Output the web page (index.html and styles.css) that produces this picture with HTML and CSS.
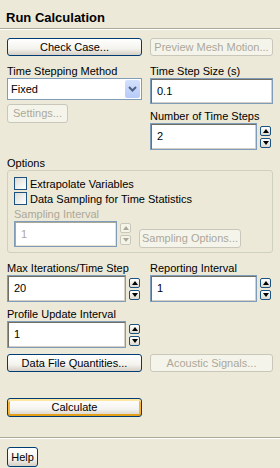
FILE: index.html
```html
<!DOCTYPE html>
<html>
<head>
  <title>Run Calculation</title>
  <link rel="stylesheet" href="styles.css">
</head>
<body>
  <div class="title">Run Calculation</div>
  <div class="sep"></div>

  <div class="content">
    <div class="row">
      <div class="button">Check Case...</div>
      <div class="button disabled">Preview Mesh Motion...</div>
    </div>

    <div class="row fields">
      <div class="col">
        <div class="label">Time Stepping Method</div>
        <div class="select">
          <span class="select-text">Fixed</span>
          <span class="select-arrow">
            <svg width="9" height="6" viewBox="0 0 9 6"><polyline points="1,1 4.5,4.5 8,1" fill="none" stroke="#4d6185" stroke-width="2"/></svg>
          </span>
        </div>
        <div class="button disabled small">Settings...</div>
      </div>
      <div class="col">
        <div class="label">Time Step Size (s)</div>
        <div class="input wide">0.1</div>
        <div class="label">Number of Time Steps</div>
        <div class="spin-field">
          <div class="input">2</div>
          <div class="spin">
            <div class="spin-btn"><span class="tri up"></span></div>
            <div class="spin-btn"><span class="tri down"></span></div>
          </div>
        </div>
      </div>
    </div>

    <div class="label options-label">Options</div>
    <div class="group">
      <div class="check"><span class="box"></span>Extrapolate Variables</div>
      <div class="check"><span class="box"></span>Data Sampling for Time Statistics</div>
      <div class="label dim">Sampling Interval</div>
      <div class="sampling">
        <div class="spin-field">
          <div class="input off">1</div>
          <div class="spin">
            <div class="spin-btn off"><span class="tri up"></span></div>
            <div class="spin-btn off"><span class="tri down"></span></div>
          </div>
        </div>
        <div class="button disabled sampling-btn">Sampling Options...</div>
      </div>
    </div>

    <div class="row fields lower">
      <div class="col">
        <div class="label">Max Iterations/Time Step</div>
        <div class="spin-field">
          <div class="input">20</div>
          <div class="spin">
            <div class="spin-btn"><span class="tri up"></span></div>
            <div class="spin-btn"><span class="tri down"></span></div>
          </div>
        </div>
        <div class="label">Profile Update Interval</div>
        <div class="spin-field">
          <div class="input">1</div>
          <div class="spin">
            <div class="spin-btn"><span class="tri up"></span></div>
            <div class="spin-btn"><span class="tri down"></span></div>
          </div>
        </div>
      </div>
      <div class="col">
        <div class="label">Reporting Interval</div>
        <div class="spin-field">
          <div class="input">1</div>
          <div class="spin">
            <div class="spin-btn"><span class="tri up"></span></div>
            <div class="spin-btn"><span class="tri down"></span></div>
          </div>
        </div>
      </div>
    </div>

    <div class="row data-row">
      <div class="button">Data File Quantities...</div>
      <div class="button disabled">Acoustic Signals...</div>
    </div>

    <div class="row calc-row">
      <div class="button default">Calculate</div>
    </div>
  </div>

  <div class="sep bottom-sep"></div>
  <div class="footer">
    <div class="button help">Help</div>
  </div>
</body>
</html>
```

FILE: styles.css
```css
* {
  box-sizing: border-box;
  margin: 0;
  padding: 0;
}

body {
  width: 280px;
  height: 468px;
  overflow: hidden;
  background-color: #ece9d8;
  font-family: "Liberation Sans", Arial, sans-serif;
  font-size: 11px;
  color: #000;
}

.title {
  height: 28px;
  padding: 10px 0 0 6px;
  font-size: 13px;
  font-weight: bold;
  line-height: 16px;
}

.sep {
  border-top: 1px solid #aca899;
  border-bottom: 1px solid #fff;
}

.content {
  padding: 8px 7px 0;
}

.row {
  display: grid;
  grid-template-columns: 135px 123px;
  column-gap: 8px;
}

.col {
  display: flex;
  flex-direction: column;
}

.label {
  height: 14px;
  line-height: 14px;
  white-space: nowrap;
}

.dim {
  color: #aca899;
}

.fields {
  margin-top: 8px;
}

.button {
  height: 18px;
  line-height: 16px;
  text-align: center;
  white-space: nowrap;
  border: 1px solid #003c74;
  border-radius: 3px;
  background: linear-gradient(#ffffff, #f4f3ee 60%, #d6d0c5);
}

.button.disabled {
  color: #aca899;
  border-color: #c9c7ba;
  background: #f5f4ea;
}

.button.small {
  width: 61px;
  height: 19px;
  margin-top: 4px;
}

.button.default {
  height: 19px;
  box-shadow: inset 0 2px 0 #ffe7a2, inset 0 -2px 0 #e5a01a, inset 2px 0 0 #f8b330, inset -2px 0 0 #f8b330;
}

.select {
  display: flex;
  align-items: center;
  height: 22px;
  border: 1px solid #7f9db9;
  background-color: #fff;
  padding: 1px;
}

.select-text {
  flex: 1;
  padding-left: 2px;
}

.select-arrow {
  width: 15px;
  height: 18px;
  display: flex;
  align-items: center;
  justify-content: center;
  background: linear-gradient(#d4e1fc, #b7cbf8);
  border-radius: 2px;
}

.input {
  height: 27px;
  line-height: 25px;
  padding-left: 6px;
  border: 1px solid #7f9db9;
  background-color: #fff;
  box-shadow: inset 1px 1px 0 #716f64, inset -1px -1px 0 #d4d0c8;
  flex: 1;
}

.input.wide {
  height: 26px;
  line-height: 24px;
  margin-bottom: 5px;
}

.input.off {
  color: #aca899;
  box-shadow: inset 1px 1px 0 #aca899, inset -1px -1px 0 #e6e3d3;
}

.spin-field {
  display: flex;
  align-items: center;
  gap: 3px;
  margin-right: 2px;
}

.spin {
  display: flex;
  flex-direction: column;
  gap: 2px;
}

.spin-btn {
  width: 11px;
  height: 10px;
  border: 1px solid #1c5180;
  border-radius: 2px;
  background: linear-gradient(#fff, #dcdad0);
  display: flex;
  align-items: center;
  justify-content: center;
}

.spin-btn.off {
  border-color: #c9c7ba;
  background: #f5f4ea;
}

.tri {
  width: 0;
  height: 0;
  border-left: 3px solid transparent;
  border-right: 3px solid transparent;
}

.tri.up {
  border-bottom: 4px solid #000;
}

.tri.down {
  border-top: 4px solid #000;
}

.spin-btn.off .tri.up {
  border-bottom-color: #aca899;
}

.spin-btn.off .tri.down {
  border-top-color: #aca899;
}

.options-label {
  margin-top: 6px;
}

.group {
  border: 1px solid #d0d0bf;
  border-radius: 3px;
  padding: 6px 6px 5px;
}

.check {
  display: flex;
  align-items: center;
  height: 13px;
  margin-bottom: 2px;
  gap: 3px;
}

.box {
  width: 13px;
  height: 13px;
  border: 1px solid #1c5180;
  background: linear-gradient(135deg, #dcdcd7, #fff);
}

.sampling {
  display: flex;
  align-items: flex-end;
  gap: 8px;
}

.sampling .spin-field {
  width: 117px;
  margin-right: 0;
}

.sampling .input {
  height: 26px;
}

.sampling-btn {
  width: 102px;
  height: 19px;
  margin-bottom: -1px;
}

.lower .col .spin-field + .label {
  margin-top: 5px;
}

.data-row {
  margin-top: 6px;
}

.calc-row {
  margin-top: 26px;
}

.bottom-sep {
  margin-top: 20px;
}

.footer {
  padding: 8px 7px 0;
}

.button.help {
  width: 31px;
  height: 20px;
  line-height: 18px;
}
```
